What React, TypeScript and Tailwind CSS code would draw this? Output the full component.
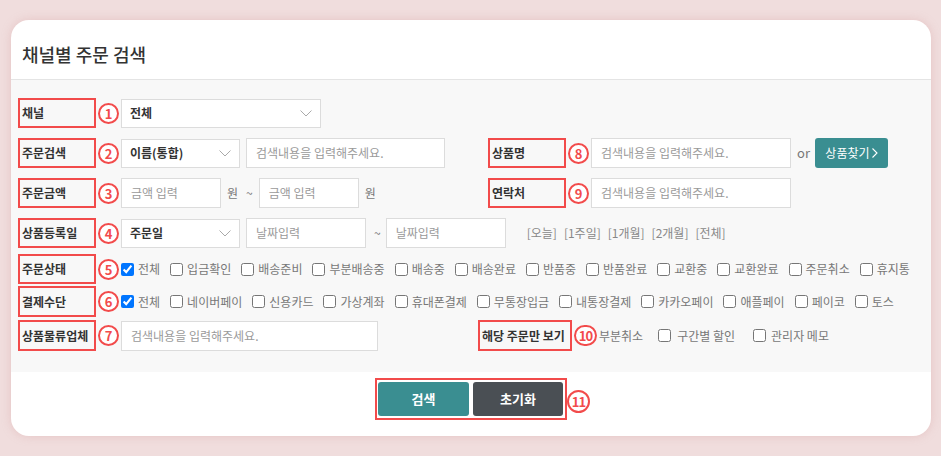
import React from "react";

const RED = "border-[#f24b4b]";

function Circle({ n, className = "" }: { n: string; className?: string }) {
  return (
    <div
      className={`h-[21px] shrink-0 rounded-full border-2 ${RED} bg-white text-[#f24b4b] font-bold text-[13px] leading-none flex items-center justify-center ${className}`}
    >
      {n}
    </div>
  );
}

function Label({ text, className = "w-[78px]" }: { text: string; className?: string }) {
  return (
    <div
      className={`h-[30px] shrink-0 border-2 ${RED} flex items-center pl-[2px] text-[12px] font-bold text-[#333] whitespace-nowrap ${className}`}
    >
      {text}
    </div>
  );
}

function Chevron() {
  return (
    <svg width="12" height="7" viewBox="0 0 12 7" className="shrink-0">
      <polyline points="0.5,0.5 6,6 11.5,0.5" fill="none" stroke="#aaa" strokeWidth="1" />
    </svg>
  );
}

function Select({ value, className }: { value: string; className: string }) {
  return (
    <div
      className={`h-[29px] shrink-0 bg-white border border-[#dcdcdc] flex items-center justify-between pl-[8px] pr-[8px] text-[12px] font-bold text-[#333] ${className}`}
    >
      <span>{value}</span>
      <Chevron />
    </div>
  );
}

function Input({ ph, className }: { ph: string; className: string }) {
  return (
    <div
      className={`h-[30px] shrink-0 bg-white border border-[#dcdcdc] flex items-center pl-[9px] text-[12px] text-[#9a9a9a] whitespace-nowrap ${className}`}
    >
      {ph}
    </div>
  );
}

function Check({ text, checked = false }: { text: string; checked?: boolean }) {
  return (
    <label className="flex items-center gap-[4px] shrink-0">
      <input type="checkbox" defaultChecked={checked} className="m-0 w-[13px] h-[13px]" />
      <span className="text-[12px] text-[#777] whitespace-nowrap">{text}</span>
    </label>
  );
}

const status = ["입금확인", "배송준비", "부분배송중", "배송중", "배송완료", "반품중", "반품완료", "교환중", "교환완료", "주문취소", "휴지통"];
const pay = ["네이버페이", "신용카드", "가상계좌", "휴대폰결제", "무통장입금", "내통장결제", "카카오페이", "애플페이", "페이코", "토스"];
const quick = ["[오늘]", "[1주일]", "[1개월]", "[2개월]", "[전체]"];

export default function App() {
  return (
    <div className="w-[941px] h-[456px] bg-[#f0dddd] pt-[20px] pl-[11px] font-['Noto_Sans_CJK_KR','Noto_Sans',sans-serif]">
      <div className="w-[920px] h-[416px] bg-white rounded-[18px] overflow-hidden flex flex-col shadow-[0_0_10px_rgba(210,150,150,0.35)]">
        {/* header */}
        <div className="h-[60px] shrink-0 border-b border-[#e4e4e4] pl-[11px] pt-[21px]">
          <h1 className="text-[18px] leading-[26px] font-medium text-[#333]">채널별 주문 검색</h1>
        </div>

        {/* body */}
        <div className="h-[292px] shrink-0 bg-[#f8f8f8] pl-[7px] pt-[18px] flex flex-col">
          {/* row 1 */}
          <div className="flex items-center h-[30px]">
            <Label text="채널" />
            <Circle n="1" className="w-[21px] ml-[2px]" />
            <Select value="전체" className="w-[200px] ml-[2px]" />
          </div>

          {/* row 2 */}
          <div className="flex items-center h-[30px] mt-[10px]">
            <div className="w-[470px] flex items-center shrink-0">
              <Label text="주문검색" />
              <Circle n="2" className="w-[21px] ml-[2px]" />
              <Select value="이름(통합)" className="w-[119px] ml-[2px]" />
              <Input ph="검색내용을 입력해주세요." className="w-[199px] ml-[6px]" />
            </div>
            <Label text="상품명" />
            <Circle n="8" className="w-[21px] ml-[2px]" />
            <Input ph="검색내용을 입력해주세요." className="w-[200px] ml-[2px]" />
            <span className="ml-[6px] text-[13px] text-[#777]">or</span>
            <button className="ml-[5px] h-[30px] w-[73px] rounded-[3px] bg-[#3a8e91] text-white text-[12px] flex items-center justify-center gap-[2px]">
              상품찾기
              <svg width="6" height="10" viewBox="0 0 6 10">
                <polyline points="0.5,0.5 5,5 0.5,9.5" fill="none" stroke="#fff" strokeWidth="1.1" />
              </svg>
            </button>
          </div>

          {/* row 3 */}
          <div className="flex items-center h-[30px] mt-[10px]">
            <div className="w-[470px] flex items-center shrink-0">
              <Label text="주문금액" />
              <Circle n="3" className="w-[21px] ml-[2px]" />
              <Input ph="금액 입력" className="w-[100px] ml-[2px]" />
              <span className="ml-[6px] text-[12px] text-[#777]">원</span>
              <span className="ml-[8px] text-[12px] text-[#777]">~</span>
              <Input ph="금액 입력" className="w-[100px] ml-[6px]" />
              <span className="ml-[6px] text-[12px] text-[#777]">원</span>
            </div>
            <Label text="연락처" />
            <Circle n="9" className="w-[21px] ml-[2px]" />
            <Input ph="검색내용을 입력해주세요." className="w-[200px] ml-[2px]" />
          </div>

          {/* row 4 */}
          <div className="flex items-center h-[30px] mt-[10px]">
            <Label text="상품등록일" />
            <Circle n="4" className="w-[21px] ml-[2px]" />
            <Select value="주문일" className="w-[119px] ml-[2px]" />
            <Input ph="날짜입력" className="w-[120px] ml-[6px]" />
            <span className="ml-[8px] text-[12px] text-[#777]">~</span>
            <Input ph="날짜입력" className="w-[120px] ml-[5px]" />
            <div className="ml-[21px] flex items-center gap-[7px] text-[12px] text-[#888] whitespace-nowrap">
              {quick.map((q) => (
                <span key={q}>{q}</span>
              ))}
            </div>
          </div>

          {/* row 5 */}
          <div className="flex items-center h-[30px] mt-[6px]">
            <Label text="주문상태" />
            <Circle n="5" className="w-[21px] ml-[2px]" />
            <div className="ml-[2px] flex items-center gap-[10px]">
              <Check text="전체" checked />
              {status.map((s) => (
                <Check key={s} text={s} />
              ))}
            </div>
          </div>

          {/* row 6 */}
          <div className="flex items-center h-[31px] mt-[2px]">
            <Label text="결제수단" className="w-[78px] h-[31px]" />
            <Circle n="6" className="w-[21px] ml-[2px]" />
            <div className="ml-[2px] flex items-center gap-[10px]">
              <Check text="전체" checked />
              {pay.map((s) => (
                <Check key={s} text={s} />
              ))}
            </div>
          </div>

          {/* row 7 */}
          <div className="flex items-center h-[31px] mt-[3px]">
            <Label text="상품물류업체" className="w-[78px] h-[31px]" />
            <Circle n="7" className="w-[21px] ml-[2px]" />
            <Input ph="검색내용을 입력해주세요." className="w-[257px] ml-[2px]" />
            <Label text="해당 주문만 보기" className="w-[94px] h-[31px] ml-[100px]" />
            <Circle n="10" className="w-[23px] ml-[2px] text-[12px] tracking-[-1px]" />
            <span className="ml-[2px] text-[12px] text-[#777]">부분취소</span>
            <div className="ml-[15px] flex items-center gap-[6px]">
              <input type="checkbox" className="m-0 w-[13px] h-[13px]" />
              <span className="text-[12px] text-[#777]">구간별 할인</span>
            </div>
            <div className="ml-[18px] flex items-center gap-[5px]">
              <input type="checkbox" className="m-0 w-[13px] h-[13px]" />
              <span className="text-[12px] text-[#777]">관리자 메모</span>
            </div>
          </div>
        </div>

        {/* footer */}
        <div className="flex justify-center pt-[6px]">
          <div className={`relative border-2 ${RED} pl-[1px] pr-[2px] py-[2px] flex gap-[4px]`}>
            <button className="w-[91px] h-[34px] rounded-[3px] bg-[#3a8e91] text-white text-[13px] font-bold">검색</button>
            <button className="w-[90px] h-[34px] rounded-[3px] bg-[#4a4f54] text-white text-[13px] font-bold">초기화</button>
            <Circle n="11" className="absolute left-full top-[10px] ml-[2px] w-[23px] h-[23px] text-[12px] tracking-[-1px]" />
          </div>
        </div>
      </div>
    </div>
  );
}
